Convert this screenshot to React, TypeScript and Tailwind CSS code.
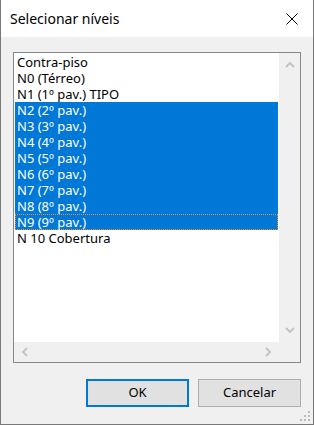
const levels = [
  "Contra-piso",
  "N0 (Térreo)",
  "N1 (1º pav.) TIPO",
  "N2 (2º pav.)",
  "N3 (3º pav.)",
  "N4 (4º pav.)",
  "N5 (5º pav.)",
  "N6 (6º pav.)",
  "N7 (7º pav.)",
  "N8 (8º pav.)",
  "N9 (9º pav.)",
  "N 10 Cobertura",
];

// indices 3..10 are selected, 10 holds the focus rect
const isSelected = (i: number) => i >= 3 && i <= 10;
const focused = 10;

function Chevron({ dir }: { dir: "up" | "down" | "left" | "right" }) {
  const paths = {
    up: "M1 6 L5 2 L9 6",
    down: "M1 2 L5 6 L9 2",
    left: "M6 1 L2 5 L6 9",
    right: "M2 1 L6 5 L2 9",
  };
  const vertical = dir === "up" || dir === "down";
  return (
    <svg
      width={vertical ? 10 : 8}
      height={vertical ? 8 : 10}
      viewBox={vertical ? "0 0 10 8" : "0 0 8 10"}
      aria-hidden="true"
    >
      <path d={paths[dir]} fill="none" stroke="#c1c1c1" strokeWidth="1.8" />
    </svg>
  );
}

export default function App() {
  return (
    <div className="relative flex h-[425px] w-[314px] flex-col border-x border-b border-[#787878] bg-[#f0f0f0] font-['Noto_Sans',sans-serif] text-black">
      {/* Title bar */}
      <div className="flex h-[37px] shrink-0 items-center justify-between bg-white pl-[9px] pr-[15px]">
        <span className="text-[14px] leading-none">Selecionar níveis</span>
        <svg width="12" height="12" viewBox="0 0 12 12" aria-hidden="true">
          <path d="M0.5 0.5 L11.5 11.5 M11.5 0.5 L0.5 11.5" stroke="#000" strokeWidth="1" />
        </svg>
      </div>

      {/* Body */}
      <div className="flex flex-1 flex-col px-[12px] pt-[15px] pb-[17px]">
        <div className="grid h-[311px] grid-cols-[1fr_21px] grid-rows-[1fr_20px] border border-[#828790] bg-[#f0f0f0]">
          <div className="bg-white p-px text-[13px] leading-[16px]">
            {levels.map((name, i) => (
              <div
                key={name}
                className={
                  "h-[16px] whitespace-nowrap pl-[2px] " +
                  (isSelected(i) ? "bg-[#0078d7] text-white " : "") +
                  (i === focused ? "border border-dotted border-[#ff8728] pl-px leading-[14px]" : "")
                }
              >
                {name}
              </div>
            ))}
          </div>
          <div className="flex flex-col items-center justify-between pt-[8px] pb-[8px]">
            <Chevron dir="up" />
            <Chevron dir="down" />
          </div>
          <div className="flex items-center justify-between pl-[7px] pr-[7px]">
            <Chevron dir="left" />
            <Chevron dir="right" />
          </div>
          <div />
        </div>

        <div className="mt-[16px] flex justify-end gap-[9px]">
          <button className="h-[28px] w-[103px] border-2 border-[#0078d7] bg-[#e1e1e1] text-[13px]">
            OK
          </button>
          <button className="h-[28px] w-[103px] border border-[#adadad] bg-[#e1e1e1] text-[13px]">
            Cancelar
          </button>
        </div>
      </div>

      {/* Resize grip */}
      <div className="absolute bottom-[3px] right-[3px] grid grid-cols-3 gap-[2px]">
        <span className="h-[2px] w-[2px]" />
        <span className="h-[2px] w-[2px]" />
        <span className="h-[2px] w-[2px] bg-[#bcbcbc]" />
        <span className="h-[2px] w-[2px]" />
        <span className="h-[2px] w-[2px] bg-[#bcbcbc]" />
        <span className="h-[2px] w-[2px] bg-[#bcbcbc]" />
        <span className="h-[2px] w-[2px] bg-[#bcbcbc]" />
        <span className="h-[2px] w-[2px] bg-[#bcbcbc]" />
        <span className="h-[2px] w-[2px] bg-[#bcbcbc]" />
      </div>
    </div>
  );
}
